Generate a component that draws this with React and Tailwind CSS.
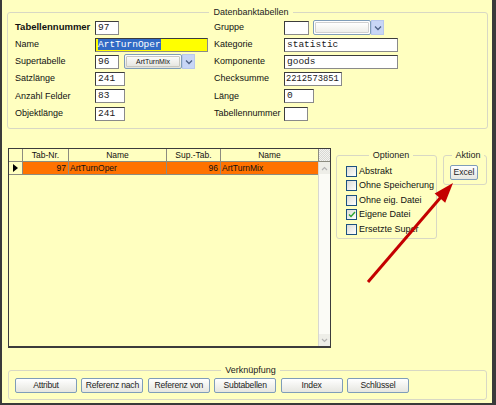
import React from "react";

const field =
  "h-[14px] border border-t-[#3c3c3c] border-l-[#3c3c3c] border-b-[#8a8a8a] border-r-[#8a8a8a] bg-white px-[2px] font-['Liberation_Mono',monospace] text-[9.5px] leading-[12px] text-[#1a1a1a] whitespace-nowrap overflow-hidden";

const btn =
  "h-[15px] rounded-[2px] border border-[#7f9db9] bg-gradient-to-b from-white to-[#e6e6e0] text-[8.6px] leading-[13px] text-center text-[#222] whitespace-nowrap overflow-hidden";

function Chevron() {
  return (
    <svg width="8" height="6" viewBox="0 0 8 6">
      <path d="M1 1.5 L4 4.5 L7 1.5" fill="none" stroke="#4d6185" strokeWidth="1.3" />
    </svg>
  );
}

function Combo({ label }) {
  return (
    <div className="ml-[5px] flex h-[15px]">
      <div className="flex w-[58px] items-center justify-center rounded-[2px] border border-[#7f9db9] bg-gradient-to-b from-white to-[#e2e2dc] text-[7px] text-[#111]">
        <span className="flex h-[11px] w-[54px] items-center justify-center rounded-[1px] border border-[#c8c8c0]">
          {label}
        </span>
      </div>
      <div className="flex w-[13px] items-center justify-center border border-[#b8c8ec] bg-[#c8d6f6]">
        <Chevron />
      </div>
    </div>
  );
}

function Row({ label, bold, children }) {
  return (
    <div className="flex h-[17.2px] items-center">
      <div className={`${bold ? "font-bold text-[9.5px]" : ""} w-[80px] shrink-0 whitespace-nowrap`}>{label}</div>
      {children}
    </div>
  );
}

function RowR({ label, children }) {
  return (
    <div className="flex h-[17.2px] items-center">
      <div className="w-[70px] shrink-0 whitespace-nowrap">{label}</div>
      {children}
    </div>
  );
}

function Check({ label, checked }) {
  return (
    <div className="flex h-[14.5px] items-center whitespace-nowrap">
      <span className="mr-[2px] flex h-[11px] w-[11px] shrink-0 items-center justify-center border border-[#1c5180] bg-gradient-to-br from-[#dcdcd6] to-white">
        {checked && (
          <svg width="8" height="7" viewBox="0 0 8 7">
            <path d="M1 3.5 L3 5.5 L7 1" fill="none" stroke="#2fa52f" strokeWidth="1.4" />
          </svg>
        )}
      </span>
      {label}
    </div>
  );
}

export default function App() {
  return (
    <div className="relative h-[405px] w-[496px] overflow-hidden border-b-2 border-l-2 border-r-[4px] border-[#3a3a3a] bg-[#ffffc0] pl-[5px] pt-[5px] font-['Liberation_Sans',Arial,sans-serif] text-[9px] text-[#111]">
      {/* Datenbanktabellen */}
      <fieldset className="h-[124px] w-[481px] rounded-[3px] border border-[#d8d8c4] pl-[7px]">
        <legend className="mx-auto px-[4px] text-[9px] leading-[14px] text-[#222]">Datenbanktabellen</legend>
        <div className="flex">
          <div className="w-[199px]">
            <Row label="Tabellennummer" bold>
              <div className={`${field} w-[24px]`}>97</div>
            </Row>
            <Row label="Name">
              <div className={`${field} w-[113px] !bg-[#ffff00]`}>
                <span className="bg-[#316ac5] text-white">ArtTurnOper</span>
              </div>
            </Row>
            <Row label="Supertabelle">
              <div className={`${field} w-[24px]`}>96</div>
              <Combo label="ArtTurnMix" />
            </Row>
            <Row label="Satzlänge">
              <div className={`${field} w-[30px]`}>241</div>
            </Row>
            <Row label="Anzahl Felder">
              <div className={`${field} w-[30px]`}>83</div>
            </Row>
            <Row label="Objektlänge">
              <div className={`${field} w-[30px]`}>241</div>
            </Row>
          </div>
          <div>
            <RowR label="Gruppe">
              <div className={`${field} w-[25px]`}></div>
              <div className="ml-[4px] flex h-[15px]">
                <div className="w-[58px] rounded-[2px] border border-[#7f9db9] bg-white p-[1px]">
                  <div className="h-full w-full rounded-[1px] border border-[#d0d0d0] bg-gradient-to-b from-white to-[#eeeeea]"></div>
                </div>
                <div className="flex w-[13px] items-center justify-center border border-[#b8c8ec] bg-[#c8d6f6]">
                  <Chevron />
                </div>
              </div>
            </RowR>
            <RowR label="Kategorie">
              <div className={`${field} w-[114px]`}>statistic</div>
            </RowR>
            <RowR label="Komponente">
              <div className={`${field} w-[114px]`}>goods</div>
            </RowR>
            <RowR label="Checksumme">
              <div className={`${field} w-[58px] !px-[1px] !text-[8.8px]`}>2212573851</div>
            </RowR>
            <RowR label="Länge">
              <div className={`${field} w-[30px]`}>0</div>
            </RowR>
            <RowR label="Tabellennummer">
              <div className={`${field} w-[24px]`}></div>
            </RowR>
          </div>
        </div>
      </fieldset>

      {/* middle */}
      <div className="mt-[19px] flex items-start">
        <div className="ml-[1px] flex h-[200px] w-[323px] flex-col border border-b-2 border-[#3c3c3c]">
          <div className="flex h-[13px] border-b border-[#8c8c80] text-[8.5px] leading-[12px]">
            <div className="w-[14px] border-r border-[#8c8c80]"></div>
            <div className="w-[46px] border-r border-[#8c8c80] text-center">Tab-Nr.</div>
            <div className="w-[98px] border-r border-[#8c8c80] text-center">Name</div>
            <div className="w-[54px] border-r border-[#8c8c80] text-center">Sup.-Tab.</div>
            <div className="w-[98px] border-r border-[#8c8c80] text-center">Name</div>
            <div className="flex-1 bg-[repeating-conic-gradient(#d8d8d4_0%_25%,#f4f4f0_0%_50%)] bg-[length:2px_2px]"></div>
          </div>
          <div className="flex flex-1">
            <div className="flex-1">
              <div className="flex h-[13px] border-b border-[#8c8c80] text-[8.5px] leading-[12px]">
                <div className="flex w-[14px] items-center justify-center border-r border-[#8c8c80]">
                  <svg width="5" height="8" viewBox="0 0 5 8">
                    <path d="M0 0 L5 4 L0 8 Z" fill="#000" />
                  </svg>
                </div>
                <div className="w-[46px] border-r border-[#8c8c80] bg-[#ff7200] pr-[2px] text-right">97</div>
                <div className="w-[98px] border-r border-[#8c8c80] bg-[#ff7200] pl-[1px]">ArtTurnOper</div>
                <div className="w-[54px] border-r border-[#8c8c80] bg-[#ff7200] pr-[2px] text-right">96</div>
                <div className="flex-1 bg-[#ff7200] pl-[1px]">ArtTurnMix</div>
              </div>
            </div>
            <div className="flex w-[12px] flex-col justify-between border-l border-[#d8d8d0] bg-[#fbfbf6]">
              <div className="flex h-[12px] items-center justify-center bg-[#eeeee8]">
                <svg width="7" height="5" viewBox="0 0 7 5">
                  <path d="M1 4 L3.5 1.5 L6 4" fill="none" stroke="#b4b4b4" strokeWidth="1.2" />
                </svg>
              </div>
              <div className="flex h-[12px] items-center justify-center bg-[#eeeee8]">
                <svg width="7" height="5" viewBox="0 0 7 5">
                  <path d="M1 1 L3.5 3.5 L6 1" fill="none" stroke="#b4b4b4" strokeWidth="1.2" />
                </svg>
              </div>
            </div>
          </div>
        </div>

        <fieldset className="ml-[5px] h-[91px] w-[101px] overflow-hidden rounded-[3px] border border-[#d8d8c4] pl-[9px]">
          <legend className="mx-auto px-[4px] text-[9px] leading-[14px] text-[#222]">Optionen</legend>
          <div className="pt-[2px]">
            <Check label="Abstrakt" />
            <Check label="Ohne Speicherung" />
            <Check label="Ohne eig. Datei" />
            <Check label="Eigene Datei" checked />
            <Check label="Ersetzte Super" />
          </div>
        </fieldset>

        <fieldset className="ml-[6px] h-[37px] w-[44px] rounded-[3px] border border-[#d8d8c4] pl-[6px]">
          <legend className="mx-auto px-[3px] text-[9px] leading-[14px] text-[#222]">Aktion</legend>
          <div className={`${btn} mt-[3px] h-[14px] w-[28px] leading-[12px]`}>Excel</div>
        </fieldset>
      </div>

      {/* Verknüpfung */}
      <fieldset className="ml-[1px] mt-[15px] h-[37px] w-[479px] rounded-[3px] border border-[#d8d8c4] pl-[6px]">
        <legend className="mx-auto px-[4px] text-[9px] leading-[14px] text-[#222]">Verknüpfung</legend>
        <div className="mt-[1px] flex gap-[4.4px]">
          {["Attribut", "Referenz nach", "Referenz von", "Subtabellen", "Index", "Schlüssel"].map((b) => (
            <div key={b} className={`${btn} w-[62px] tracking-[-0.2px]`}>
              {b}
            </div>
          ))}
        </div>
      </fieldset>

      {/* red annotation arrow */}
      <svg className="pointer-events-none absolute left-[-2px] top-0" width="496" height="405" viewBox="0 0 496 405">
        <line x1="368" y1="282" x2="441" y2="197" stroke="#c40000" strokeWidth="3" />
        <polygon points="453,183 445.2,202.8 434.6,193.6" fill="#c40000" />
      </svg>
    </div>
  );
}
